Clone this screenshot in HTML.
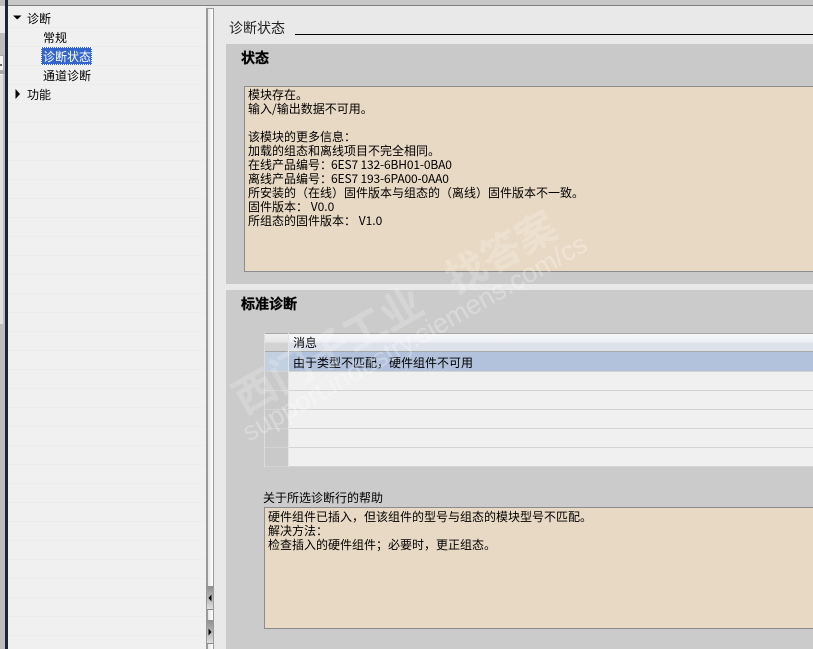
<!DOCTYPE html>
<html><head><meta charset="utf-8">
<style>
html,body{margin:0;padding:0;width:813px;height:649px;overflow:hidden;background:#e9e9e9}
body{position:relative;font-family:"Liberation Sans","WenQuanYi Zen Hei","Noto Sans CJK SC",sans-serif;font-size:12px;color:#000}
.a{position:absolute;box-sizing:border-box}
.t{position:absolute;white-space:pre;line-height:14px;font-family:"WenQuanYi Zen Hei","Noto Sans CJK SC",sans-serif;font-size:12px;color:#000}
.nr{position:absolute;left:8px;width:197px;height:1px;background:#ececec}
.tl{position:absolute;left:264px;width:549px;height:1px;background:#d4d4d4}
.box{position:absolute;background:#e8d9c4;border:1px solid #8c8c8c;border-right:0;box-sizing:border-box}
b.h{position:absolute;font-size:14px;line-height:16px;font-family:"WenQuanYi Zen Hei","Noto Sans CJK SC",sans-serif;white-space:pre;-webkit-text-stroke:.3px #000}
.n{letter-spacing:-.15px;margin-left:-1px}
</style></head><body>
<!-- top strip -->
<div class="a" style="left:0;top:0;width:813px;height:5px;background:#c8c8c8"></div>
<div class="a" style="left:8px;top:5px;width:805px;height:1px;background:#808080"></div>
<!-- far-left -->
<div class="a" style="left:0;top:0;width:5px;height:649px;background:#bdbdbd"></div>
<div class="a" style="left:0;top:6px;width:5px;height:27px;background:#e9e9e9"></div>
<div class="a" style="left:0;top:55px;width:4px;height:16px;background:#f4f4f4;border:1px solid #aaa;border-left:0"></div>
<div class="a" style="left:0;top:64px;width:2px;height:2px;background:#666"></div>
<div class="a" style="left:0;top:71px;width:5px;height:3px;background:#a8a8a8"></div>
<div class="a" style="left:0;top:74px;width:3px;height:250px;background:#e0e0e0;border-top:1px solid #f4f4f4"></div>
<div class="a" style="left:5px;top:0;width:3px;height:649px;background:#1c2538"></div>
<!-- nav -->
<div class="a" style="left:8px;top:6px;width:198px;height:643px;background:#f0f0f0"></div>
<div id="rows"><div class="nr" style="top:27px"></div><div class="nr" style="top:46px"></div><div class="nr" style="top:65px"></div><div class="nr" style="top:84px"></div><div class="nr" style="top:103px"></div><div class="nr" style="top:122px"></div><div class="nr" style="top:141px"></div><div class="nr" style="top:160px"></div><div class="nr" style="top:179px"></div><div class="nr" style="top:198px"></div><div class="nr" style="top:217px"></div><div class="nr" style="top:236px"></div><div class="nr" style="top:255px"></div><div class="nr" style="top:274px"></div><div class="nr" style="top:293px"></div><div class="nr" style="top:312px"></div><div class="nr" style="top:331px"></div><div class="nr" style="top:350px"></div><div class="nr" style="top:369px"></div><div class="nr" style="top:388px"></div><div class="nr" style="top:407px"></div><div class="nr" style="top:426px"></div><div class="nr" style="top:445px"></div><div class="nr" style="top:464px"></div><div class="nr" style="top:483px"></div><div class="nr" style="top:502px"></div><div class="nr" style="top:521px"></div><div class="nr" style="top:540px"></div><div class="nr" style="top:559px"></div><div class="nr" style="top:578px"></div><div class="nr" style="top:597px"></div><div class="nr" style="top:616px"></div><div class="nr" style="top:635px"></div></div>
<svg class="a" style="left:12px;top:12px" width="14" height="14"><path d="M1 3.500H9.500L5.250 7.500Z" fill="#000"/></svg>
<svg class="a" style="left:12px;top:88px" width="14" height="14"><path d="M3.500 1V11L8 6Z" fill="#000"/></svg>
<div class="t" style="left:27px;top:12px">诊断</div>
<div class="t" style="left:43px;top:31px">常规</div>
<div class="a" style="left:41px;top:47px;width:51px;height:18px;background:#3465cc;outline:1px dotted #fff;outline-offset:-1px"></div>
<div class="t" style="left:43px;top:50px;color:#fff">诊断状态</div>
<div class="t" style="left:43px;top:69px">通道诊断</div>
<div class="t" style="left:27px;top:88px">功能</div>
<!-- splitter -->
<div class="a" style="left:206px;top:8px;width:8px;height:641px;background:linear-gradient(90deg,#e6e6e6,#fff);border:1px solid #9a9a9a;border-bottom:0;border-left-width:2px"></div>
<div class="a" style="left:207px;top:586px;width:6px;height:24px;background:linear-gradient(#8f8f8f,#c4c4c4 70%,#e0e0e0);border-bottom:1px solid #888"></div>
<div class="a" style="left:207px;top:620px;width:6px;height:24px;background:linear-gradient(#8f8f8f,#c4c4c4 70%,#e0e0e0);border-bottom:1px solid #888"></div>
<svg class="a" style="left:207px;top:592px" width="6" height="12"><path d="M4.500 2.500V9.500L1.500 6Z" fill="#000"/></svg>
<svg class="a" style="left:207px;top:626px" width="6" height="12"><path d="M1.500 2.500V9.500L4.500 6Z" fill="#000"/></svg>
<!-- right panel -->
<div class="a" style="left:214px;top:6px;width:599px;height:643px;background:#e9e9e9"></div>
<div class="t" style="left:229px;top:20px;font-size:14px;line-height:16px;color:#222">诊断状态</div>
<div class="a" style="left:295px;top:34px;width:518px;height:1px;background:#000"></div>
<div class="a" style="left:226px;top:44px;width:587px;height:240px;background:#c9c9c9"></div>
<div class="a" style="left:226px;top:290px;width:587px;height:359px;background:#cbcbcb"></div>
<b class="h" style="left:241px;top:50px">状态</b>
<b class="h" style="left:241px;top:296px">标准诊断</b>
<div class="box" style="left:244px;top:86px;width:569px;height:186px"></div>
<div class="t" style="left:248px;top:88px">模块存在。
输入/输出数据不可用。

该模块的更多信息：
加载的组态和离线项目不完全相同。
在线产品编号：<span class="n">6ES7 132-6BH01-0BA0</span>
离线产品编号：<span class="n">6ES7 193-6PA00-0AA0</span>
所安装的（在线）固件版本与组态的（离线）固件版本不一致。
固件版本： V0.0
所组态的固件版本： V1.0</div>
<!-- table -->
<div class="a" style="left:264px;top:333px;width:549px;height:134px;background:#f0f0f0"></div>
<div class="a" style="left:264px;top:333px;width:549px;height:19px;background:linear-gradient(#f6f7f9,#eef0f4 45%,#dde1ea 55%,#dde1ea);border-top:1px solid #a8a8a8;border-bottom:1px solid #a8a8a8"></div>
<div class="a" style="left:264px;top:334px;width:24px;height:17px;background:linear-gradient(#efefef,#e6e6e6 45%,#d2d2d2 55%,#d2d2d2)"></div>
<div class="a" style="left:264px;top:352px;width:549px;height:19px;background:#b2c1dc"></div>
<div class="a" style="left:264px;top:352px;width:24px;height:19px;background:#c3d0e0"></div>
<div class="a" style="left:264px;top:371px;width:24px;height:96px;background:#c9c9c9"></div>
<div class="tl" style="top:371px"></div><div class="tl" style="top:390px"></div><div class="tl" style="top:409px"></div><div class="tl" style="top:428px"></div><div class="tl" style="top:447px"></div><div class="tl" style="top:466px"></div>
<div class="a" style="left:264px;top:333px;width:1px;height:134px;background:#dcdcdc"></div>
<div class="a" style="left:288px;top:333px;width:1px;height:134px;background:#e4e4e4"></div>
<div class="t" style="left:293px;top:336px">消息</div>
<div class="t" style="left:293px;top:356px">由于类型不匹配，硬件组件不可用</div>
<!-- help -->
<div class="t" style="left:263px;top:491px">关于所选诊断行的帮助</div>
<div class="box" style="left:264px;top:507px;width:549px;height:122px"></div>
<div class="t" style="left:268px;top:510px">硬件组件已插入，但该组件的型号与组态的模块型号不匹配。
解决方法：
检查插入的硬件组件；必要时，更正组态。</div>
<!-- watermark -->
<svg class="a" style="left:0;top:0;pointer-events:none" width="813" height="649">
<g fill="#fff">
<text fill-opacity=".28" transform="translate(249,442) rotate(-29.500)" font-family="Liberation Sans" font-size="27">support.industry.siemens.com/cs</text>
<text fill-opacity=".2" transform="translate(244,415) rotate(-29.500)" font-family="Noto Sans CJK SC" font-weight="700" font-size="42">西门子工业</text>
<text fill-opacity=".2" transform="translate(456,294) rotate(-29.500)" font-family="Noto Sans CJK SC" font-weight="700" font-size="40">找答案</text>
</g></svg>
</body></html>
